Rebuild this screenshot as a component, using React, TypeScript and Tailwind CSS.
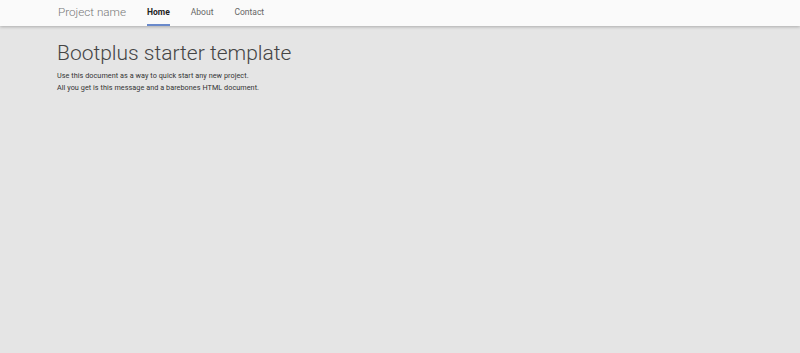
import React from 'react';

const links = [
  { label: 'Home', active: true },
  { label: 'About', active: false },
  { label: 'Contact', active: false },
];

export default function App() {
  return (
    <div className="min-h-screen bg-[#e5e5e5] font-['Roboto',sans-serif]">
      {/* Navbar */}
      <div className="h-[26px] bg-[#fafafa] shadow-[0_1px_3px_rgba(0,0,0,0.25)]">
        <div className="flex h-full items-stretch pl-[58px]">
          <span className="flex items-center text-[11.7px] font-light text-[#777] mr-[21px]">Project name</span>
          {links.map(link => (
            <a
              key={link.label}
              className={`flex items-center mr-[21px] text-[8.5px] border-b-2 ${
                link.active ? 'font-bold text-[#222] border-[#6a8acb]' : 'text-[#666] border-transparent'
              }`}
            >
              {link.label}
            </a>
          ))}
        </div>
      </div>

      {/* Content */}
      <div className="pl-[57px] pt-[13px]">
        <h1 className="text-[21px] font-light text-[#444] leading-[28px]">Bootplus starter template</h1>
        <p className="mt-[3px] text-[7.25px] tracking-[0.05px] leading-[12px] text-[#333]">
          Use this document as a way to quick start any new project.
          <br />
          All you get is this message and a barebones HTML document.
        </p>
      </div>
    </div>
  );
}
